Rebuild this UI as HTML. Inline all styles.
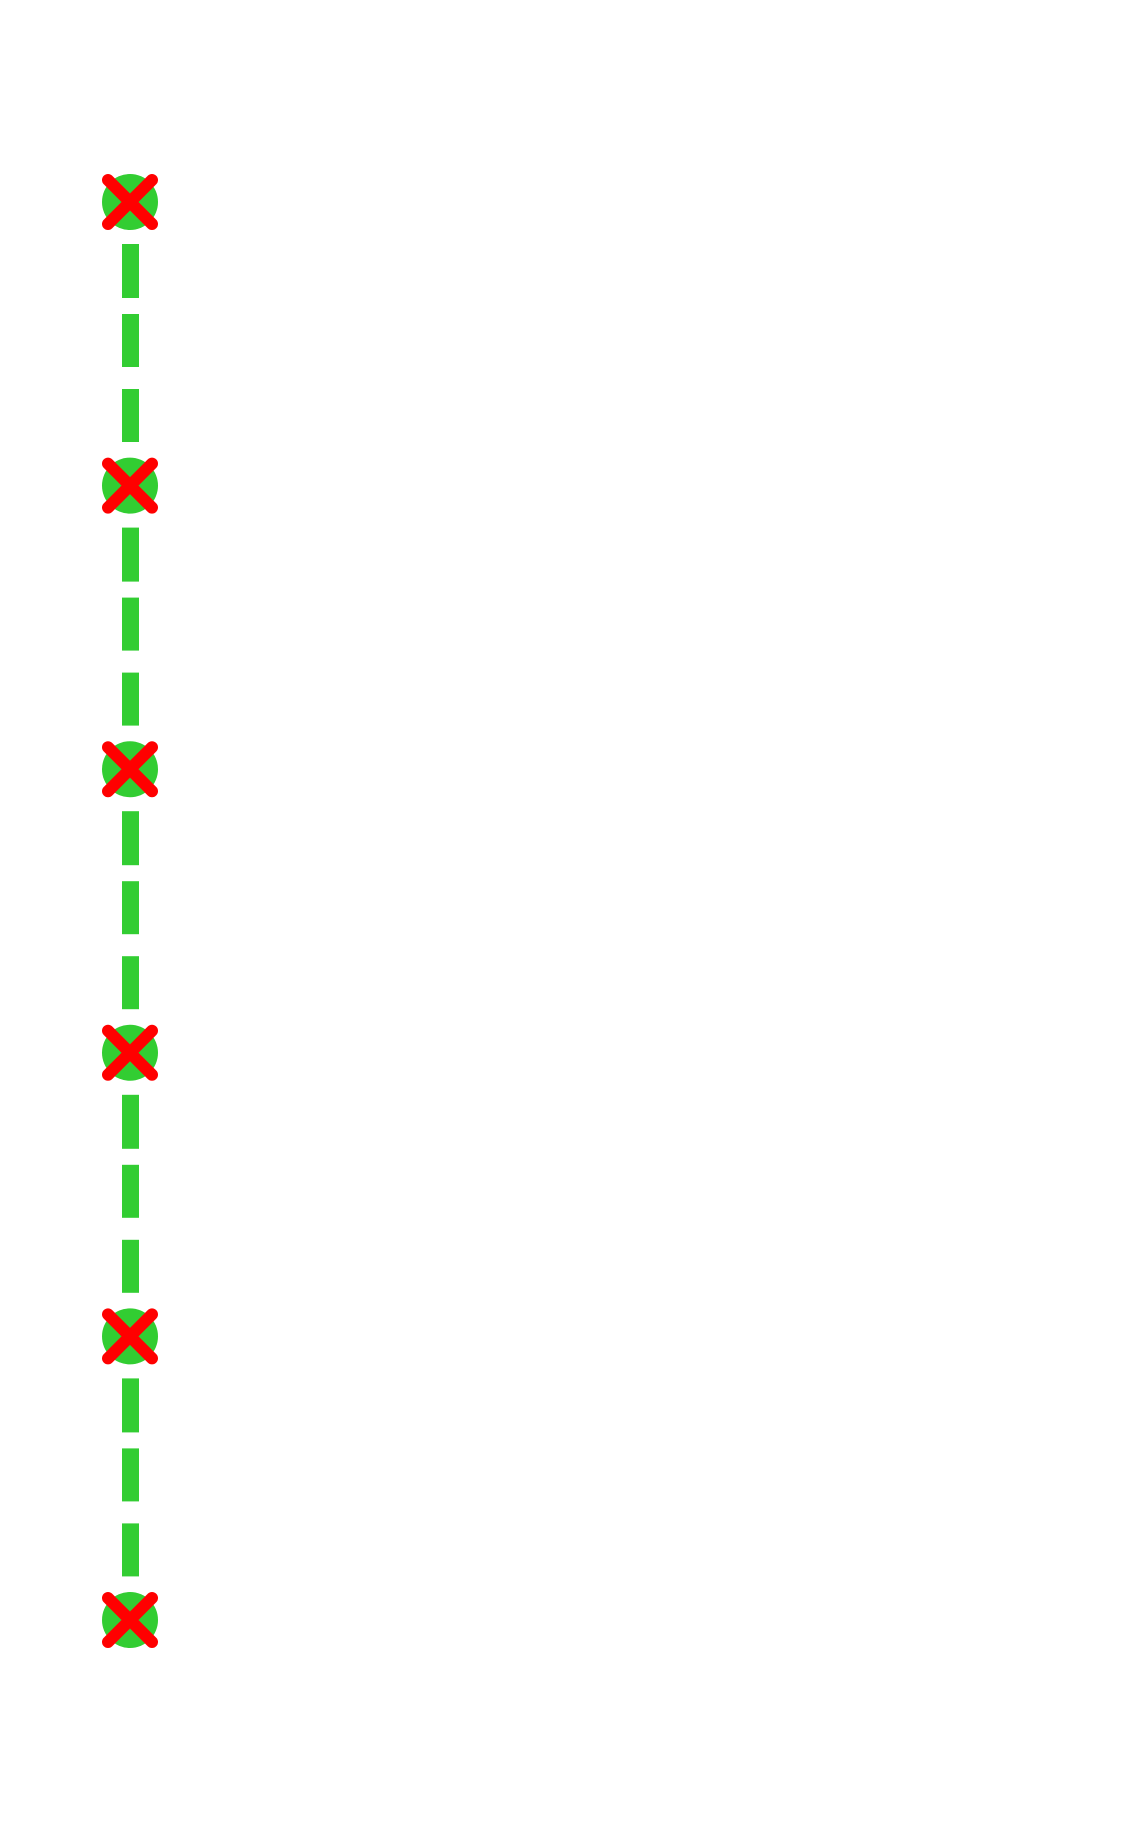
<!DOCTYPE html>
<html><head><meta charset="utf-8"><style>html,body{margin:0;padding:0;background:#fff;}svg{display:block}</style></head>
<body>
<svg width="1121" height="1827" viewBox="0 0 1121 1827" xmlns="http://www.w3.org/2000/svg">
<defs>
<g id="seg" fill="#32CD32">
<rect x="122" y="42" width="17" height="54"/>
<rect x="122" y="112" width="17" height="53"/>
<rect x="122" y="187" width="17" height="53"/>
</g>
<g id="mk">
<circle cx="130" cy="0" r="28" fill="#32CD32"/>
<path d="M108 -22L152 22M108 22L152 -22" stroke="#FF0000" stroke-width="12" stroke-linecap="round"/>
</g>
</defs>
<use href="#seg" y="202"/>
<use href="#seg" y="485.6"/>
<use href="#seg" y="769.2"/>
<use href="#seg" y="1052.8"/>
<use href="#seg" y="1336.4"/>
<use href="#mk" y="202"/>
<use href="#mk" y="485.6"/>
<use href="#mk" y="769.2"/>
<use href="#mk" y="1052.8"/>
<use href="#mk" y="1336.4"/>
<use href="#mk" y="1620"/>
</svg>
</body></html>
